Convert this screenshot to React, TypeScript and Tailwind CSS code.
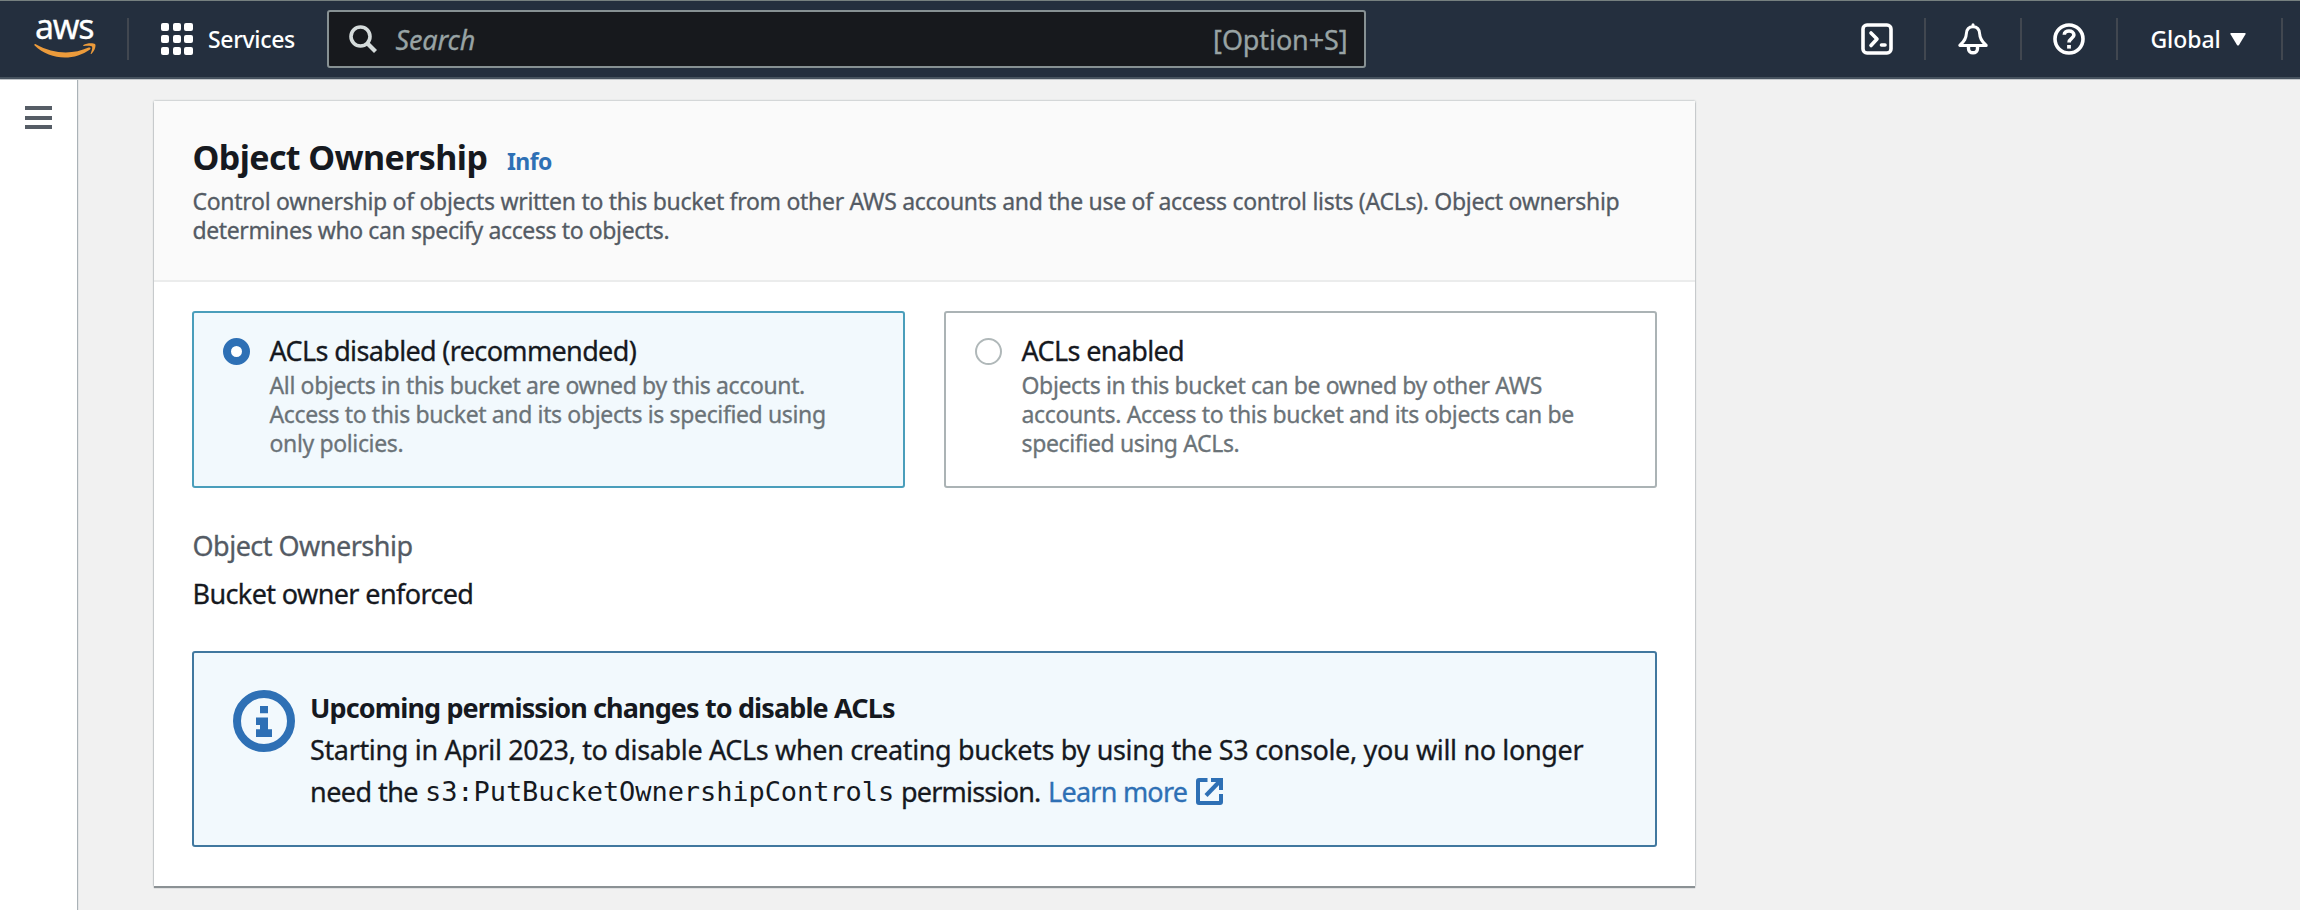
import type { ReactNode } from "react";

function AwsLogo() {
  return (
    <div className="-mt-[7px] flex w-[62px] flex-col">
      <span className="h-[28px] pl-[1px] text-[34px] leading-[28px] tracking-[-1.3px] text-white [-webkit-text-stroke:0.3px]">aws</span>
      <svg width="62" height="16" viewBox="0 0 62 16" className="mt-[3px]" fill="#ec9b3b">
        <path d="M0.4 2.2C0 1.4 .8 .7 1.8 1.3C20 11.6 39 11.6 54.6 4.6C56.200 3.900 57.200 5.400 56 6.400C40 18 16 17.400 0.400 2.200Z" />
        <path d="M49.400 2C52.600 -.2 59.400 -.2 61 .9C62.400 2.200 60.800 8 57.600 10.800C57 11.300 56.500 11 56.700 10.400C57.700 7.900 58.700 4.600 58 3.600C57.300 2.600 53 2.700 50 3C49.200 3.100 48.800 2.500 49.400 2Z" />
      </svg>
    </div>
  );
}

function Divider() {
  return <div className="h-[42px] w-[2px] bg-[#414750]" />;
}

function NavIcon({ children }: { children: ReactNode }) {
  return (
    <div className="flex w-[94.3px] justify-center">
      <svg width="32" height="32" viewBox="0 0 32 32" fill="none" stroke="#fff" strokeWidth="3.6" strokeLinecap="round" strokeLinejoin="round">
        {children}
      </svg>
    </div>
  );
}

function Header() {
  return (
    <header className="flex h-[79px] shrink-0 items-center border-t border-b-2 border-t-[#76807f] border-b-[#46525e] bg-[#242f3e] pl-[34px] shadow-[0_1px_0_#c3c7ca]">
      <AwsLogo />
      <div className="ml-[31px]">
        <Divider />
      </div>
      <div className="ml-[32px] grid grid-cols-3 gap-[3.500px]">
        {Array.from({ length: 9 }, (_, i) => (
          <span key={i} className="size-[8.200px] rounded-[2px] bg-white" />
        ))}
      </div>
      <span className="mt-[1px] ml-[15.500px] w-[118.500px] text-[23px] font-medium tracking-[-0.350px] text-white">Services</span>
      <div className="flex h-[58px] w-[1039px] items-center rounded-[3px] border-2 border-[#879193] bg-[#17191d] pr-[16px] pl-[20px] text-[27px] text-[#98a3a4] [-webkit-text-stroke:0.3px]">
        <svg width="30" height="30" viewBox="0 0 30 30" fill="none" stroke="#d5dbdb" strokeWidth="3.600">
          <circle cx="11.500" cy="12.500" r="9.500" />
          <path d="M18.500 19.500L26.500 27.500" strokeWidth="4.200" />
        </svg>
        <span className="mt-[2px] ml-[17px] flex-1 tracking-[-0.150px] italic">Search</span>
        <span className="mt-[2px] tracking-[-0.100px]">[Option+S]</span>
      </div>
      <div className="ml-[464px] flex items-center">
        <NavIcon>
          <rect x="2" y="2" width="28" height="28" rx="4" />
          <path d="M10 10L16 16L10 22.500" />
          <path d="M20.500 22H24" />
        </NavIcon>
        <Divider />
        <NavIcon>
          <path d="M16 1.800V3.500" strokeWidth="3" />
          <path d="M16 3.800C11.500 3.800 9.500 7 9.300 11C9.100 16.500 6.500 18.500 2.800 22.400H29.200C25.500 18.500 22.900 16.500 22.700 11C22.500 7 20.500 3.800 16 3.800Z" strokeWidth="3" />
          <path d="M11.500 23.500V25.500C11.500 28.200 13.500 29.800 16 29.800S20.500 28.200 20.500 25.500V23.500" strokeWidth="3.400" />
        </NavIcon>
        <Divider />
        <NavIcon>
          <circle cx="16" cy="16" r="14" />
          <path d="M11.300 11.800C11.300 9.300 13.300 8 16 8S20.900 9.500 20.900 12C20.900 15.300 16 15.500 16 19.500" strokeLinecap="butt" strokeWidth="3.600" />
          <path d="M14.100 22H17.900V25.600H14.100Z" fill="#fff" stroke="none" />
        </NavIcon>
        <Divider />
        <span className="mt-[1px] ml-[32px] w-[80px] text-[23px] font-medium tracking-[-0.050px] text-white">Global</span>
        <svg width="16" height="13" viewBox="0 0 16 13" fill="#fff">
          <path d="M1 0H15Q16 .3 15.500 1.200L9 12Q8 13.200 7 12L.5 1.200Q0 .3 1 0Z" />
        </svg>
        <div className="ml-[34.500px]">
          <Divider />
        </div>
      </div>
    </header>
  );
}

function Option({ title, lines, selected }: { title: string; lines: string[]; selected?: boolean }) {
  return (
    <div
      className={
        selected
          ? "flex h-[177px] rounded-[3px] border-2 border-[#4a9ebb] bg-[#f2f9fd] pt-[21px] pl-[29px]"
          : "flex h-[177px] rounded-[3px] border-2 border-[#abb3b5] bg-white pt-[21px] pl-[29px]"
      }
    >
      <span
        className={
          selected
            ? "mt-[4px] size-[27px] rounded-full border-8 border-[#2e70b5] bg-white"
            : "mt-[4px] size-[27px] rounded-full border-2 border-[#b0b8b9] bg-white"
        }
      />
      <div className="ml-[19.500px]">
        <div className="h-[37px] text-[27px] leading-[34px] tracking-[-0.650px] text-[#16191f]">{title}</div>
        {lines.map((line) => (
          <div key={line} className="text-[23px] leading-[29px] tracking-[-0.365px] whitespace-nowrap text-[#6b7378]">
            {line}
          </div>
        ))}
      </div>
    </div>
  );
}

function Alert() {
  return (
    <div className="mt-[36px] flex h-[196px] rounded-[3px] border-2 border-[#41789f] bg-[#f2f9fd] pt-[34px] pl-[39px]">
      <svg width="62" height="62" viewBox="0 0 62 62" className="mt-[3px]">
        <circle cx="31" cy="31" r="27" fill="none" stroke="#2e70b5" strokeWidth="8" />
        <path d="M27 16H35V23.300H27ZM23 27.500H35V39.200H39V47H23V39.200H27V35H23Z" fill="#2e70b5" />
      </svg>
      <div className="ml-[15px] text-[27px] leading-[42px] whitespace-nowrap text-[#16191f]">
        <div className="font-bold tracking-[-0.880px] [-webkit-text-stroke:0px]">Upcoming permission changes to disable ACLs</div>
        <div className="tracking-[-0.348px]">
          Starting in April 2023, to disable ACLs when creating buckets by using the S3 console, you will no longer
        </div>
        <div className="flex tracking-[-0.560px]">
          <span className="w-[115px]">need the</span>
          <span className="w-[476px] font-['DejaVu_Sans_Mono',monospace] tracking-[-0.080px] [-webkit-text-stroke:0px]">s3:PutBucketOwnershipControls</span>
          <span className="w-[147px] tracking-[-0.800px]">permission.</span>
          <span className="w-[148px] tracking-[-0.750px] text-[#2e70b5]">Learn more</span>
          <svg width="27" height="27" viewBox="0 0 27 27" fill="none" stroke="#2e70b5" strokeWidth="4" className="mt-[7px]">
            <path d="M11.500 2H3Q2 2 2 3V24Q2 25 3 25H24Q25 25 25 24V16" />
            <path d="M15 2H25V12" />
            <path d="M24.500 2.500L10 17.500" strokeWidth="4.200" />
          </svg>
        </div>
      </div>
    </div>
  );
}

export default function App() {
  return (
    <div className="flex h-[910px] w-[2300px] flex-col overflow-hidden bg-[#f1f1f1] font-['Noto_Sans',sans-serif]">
      <Header />
      <div className="flex flex-1 [-webkit-text-stroke:0.3px]">
        <aside className="z-0 mt-[1px] w-[77px] bg-white pt-[26px] pl-[25px] shadow-[1px_0_1px_#aab2b7]">
          <div className="flex w-[27px] flex-col gap-[5.600px]">
            <span className="h-[4px] bg-[#565d66]" />
            <span className="h-[4px] bg-[#565d66]" />
            <span className="h-[4px] bg-[#565d66]" />
          </div>
        </aside>
        <main className="pt-[22px] pl-[77px]">
          <section className="h-[785px] w-[1541px] bg-white shadow-[0_2px_1px_#8b9194,0_0_2px_#9aa3a6]">
            <div className="h-[181px] border-b-2 border-[#ebecec] bg-[#fafafa] pt-[34px] pl-[38.500px]">
              <div className="flex items-baseline leading-[44px] [-webkit-text-stroke:0px]">
                <h2 className="w-[314.500px] text-[34px] font-bold tracking-[-0.600px] text-[#16191f]">Object Ownership</h2>
                <span className="text-[23px] font-bold tracking-[-0.600px] text-[#2e70b5]">Info</span>
              </div>
              <p className="mt-[4px] text-[23px] leading-[29px] tracking-[-0.293px] whitespace-nowrap text-[#545b64]">
                Control ownership of objects written to this bucket from other AWS accounts and the use of access control lists (ACLs). Object ownership
                <br />
                <span className="tracking-[-0.390px]">determines who can specify access to objects.</span>
              </p>
            </div>
            <div className="px-[38px] pt-[29px]">
              <div className="grid grid-cols-2 gap-[39px]">
                <Option
                  selected
                  title="ACLs disabled (recommended)"
                  lines={[
                    "All objects in this bucket are owned by this account.",
                    "Access to this bucket and its objects is specified using",
                    "only policies.",
                  ]}
                />
                <Option
                  title="ACLs enabled"
                  lines={[
                    "Objects in this bucket can be owned by other AWS",
                    "accounts. Access to this bucket and its objects can be",
                    "specified using ACLs.",
                  ]}
                />
              </div>
              <div className="mt-[36px] text-[27px] leading-[44px] tracking-[-0.510px]">
                <div className="pl-[0.500px] text-[#545b64]">Object Ownership</div>
                <div className="mt-[4px] h-[43px] pl-[0.500px] tracking-[-0.610px] text-[#16191f]">Bucket owner enforced</div>
              </div>
              <Alert />
            </div>
          </section>
        </main>
      </div>
    </div>
  );
}
